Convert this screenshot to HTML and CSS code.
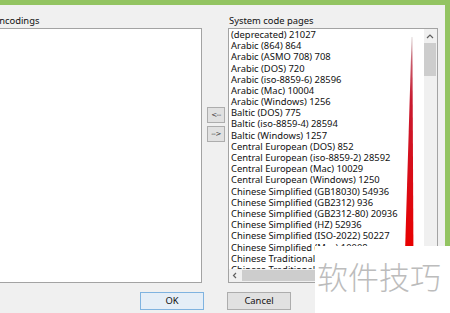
FILE: index.html
```html
<!DOCTYPE html>
<html>
<head>
<meta charset="utf-8">
<link rel="stylesheet" href="styles.css">
</head>
<body>
<div class="topbar"></div>
<div class="main">
  <div class="dialog">
    <div class="lists">
      <div class="col col-left">
        <div class="label">Encodings</div>
        <div class="listbox listbox-left"></div>
      </div>
      <div class="col col-mid">
        <button class="move">&lt;--</button>
        <button class="move">--&gt;</button>
      </div>
      <div class="col col-right">
        <div class="label">System code pages</div>
        <div class="listbox listbox-right">
          <ul class="items">
            <li>(deprecated) 21027</li>
            <li>Arabic (864) 864</li>
            <li>Arabic (ASMO 708) 708</li>
            <li>Arabic (DOS) 720</li>
            <li>Arabic (iso-8859-6) 28596</li>
            <li>Arabic (Mac) 10004</li>
            <li>Arabic (Windows) 1256</li>
            <li>Baltic (DOS) 775</li>
            <li>Baltic (iso-8859-4) 28594</li>
            <li>Baltic (Windows) 1257</li>
            <li>Central European (DOS) 852</li>
            <li>Central European (iso-8859-2) 28592</li>
            <li>Central European (Mac) 10029</li>
            <li>Central European (Windows) 1250</li>
            <li>Chinese Simplified (GB18030) 54936</li>
            <li>Chinese Simplified (GB2312) 936</li>
            <li>Chinese Simplified (GB2312-80) 20936</li>
            <li>Chinese Simplified (HZ) 52936</li>
            <li>Chinese Simplified (ISO-2022) 50227</li>
            <li>Chinese Simplified (Mac) 10008</li>
            <li>Chinese Traditional (Big5) 950</li>
            <li>Chinese Traditional (CNS) 20000</li>
          </ul>
          <div class="vscroll">
            <div class="sbtn"><svg width="13" height="13" viewBox="0 0 13 13"><polyline points="3,9 6,6 9,9" fill="none" stroke="#606060" stroke-width="1.2"/></svg></div>
            <div class="vthumb"></div>
          </div>
          <div class="hscroll">
            <div class="sbtn"><svg width="13" height="13" viewBox="0 0 13 13"><polyline points="7,4 4.5,6.5 7,9" fill="none" stroke="#606060" stroke-width="1.2"/></svg></div>
            <div class="hthumb"></div>
          </div>
          <div class="corner"></div>
        </div>
      </div>
    </div>
    <div class="actions">
      <button class="btn btn-default">OK</button>
      <button class="btn">Cancel</button>
    </div>
  </div>
  <div class="side"></div>
</div>
<svg class="arrow" width="450" height="313" viewBox="0 0 450 313">
  <defs>
    <linearGradient id="ag" x1="0" y1="37" x2="0" y2="246" gradientUnits="userSpaceOnUse">
      <stop offset="0" stop-color="#d8d0d0"/>
      <stop offset="0.12" stop-color="#c85a6a"/>
      <stop offset="0.3" stop-color="#c81a30"/>
      <stop offset="1" stop-color="#e80000"/>
    </linearGradient>
  </defs>
  <polygon points="411.6,37 412.4,37 413.4,246 405.2,246" fill="url(#ag)"/>
</svg>
<div class="watermark">软件技巧</div>
</body>
</html>
```
FILE: styles.css
```css
* { box-sizing: border-box; }
html, body {
  margin: 0;
  padding: 0;
}
body {
  width: 450px;
  height: 313px;
  overflow: hidden;
  position: relative;
  background: #f0f0f0;
  font-family: "Noto Sans", "Open Sans", sans-serif;
  font-size: 9.4px;
  color: #111;
}
.topbar {
  height: 5px;
  background: #93c462;
}
.main {
  display: flex;
  height: 308px;
}
.dialog {
  flex: 1;
  margin-left: -7px;
  padding-right: 7px;
  display: flex;
  flex-direction: column;
}
.side {
  width: 5px;
  background: #93c462;
}
.lists {
  display: flex;
  padding-top: 9px;
}
.col { display: flex; flex-direction: column; }
.col-left { width: 209px; }
.col-mid { width: 26px; padding-left: 5px; padding-top: 93px; gap: 3px; }
.col-right { width: 210px; }
.label {
  line-height: 11.2px;
  height: 11.2px;
  margin-top: 1px;
  margin-bottom: 1.8px;
  padding-left: 1px;
  white-space: nowrap;
}
.listbox {
  height: 255px;
  background: #fff;
  border: 1px solid #a3a3a3;
}
.listbox-right {
  display: grid;
  grid-template-columns: 1fr 13px;
  grid-template-rows: 1fr 13px;
  overflow: hidden;
}
.items {
  list-style: none;
  margin: 0;
  padding: 0 0 0 2px;
  overflow: hidden;
  white-space: nowrap;
}
.items li {
  line-height: 11.2px;
  height: 11.2px;
}
.vscroll {
  background: #f0f0f0;
  display: flex;
  flex-direction: column;
}
.sbtn { width: 13px; height: 13px; flex: none; }
.sbtn svg { display: block; }
.vthumb {
  margin: 1px 1px 0 0;
  height: 33px;
  background: #cdcdcd;
}
.hscroll {
  background: #f0f0f0;
  display: flex;
}
.hthumb {
  margin: 1px 0 1px 0;
  width: 140px;
  background: #cdcdcd;
}
.corner { background: #f0f0f0; }
.move {
  width: 18px;
  height: 16px;
  padding: 0;
  margin: 0;
  border: 1px solid #adadad;
  background: #e1e1e1;
  font-family: "DejaVu Sans", sans-serif;
  font-size: 7px;
  letter-spacing: -0.4px;
  line-height: 14px;
  color: #333;
  white-space: nowrap;
  text-align: center;
}
.actions {
  display: flex;
  justify-content: center;
  gap: 23px;
  margin-top: 9px;
}
.btn {
  width: 64px;
  height: 18px;
  padding: 0;
  margin: 0;
  border: 1px solid #adadad;
  background: #e1e1e1;
  font-family: "Noto Sans", sans-serif;
  font-size: 9.4px;
  color: #111;
}
.btn-default {
  border-color: #7fb3e0;
  background: #e5eef7;
}
.arrow {
  position: absolute;
  left: 0;
  top: 0;
  pointer-events: none;
}
.watermark {
  position: absolute;
  left: 315px;
  top: 246px;
  right: 0;
  bottom: 0;
  background: #fff;
  font-family: "Noto Sans CJK SC", sans-serif;
  font-weight: 300;
  font-size: 31px;
  line-height: 31px;
  padding: 14px 0 0 2px;
  color: #bcbcbc;
  white-space: nowrap;
}
```
